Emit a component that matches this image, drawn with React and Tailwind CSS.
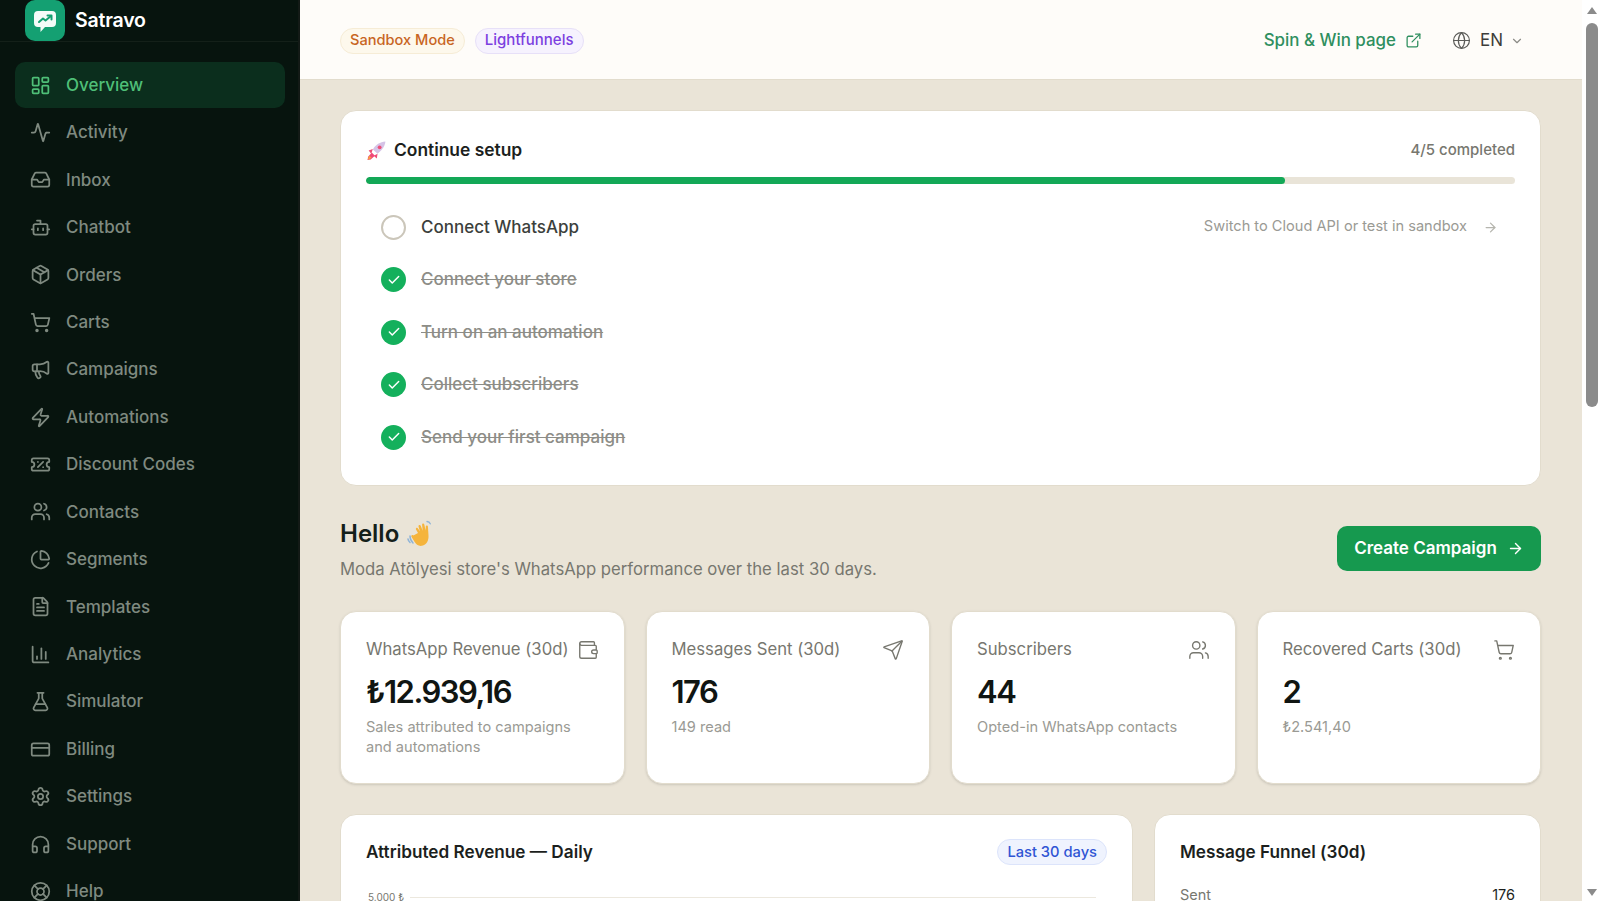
import React from "react";
import { LayoutDashboard, Activity, Inbox, Bot, Package, ShoppingCart, Megaphone, Zap, TicketPercent, Users, ChartPie, FileText, ChartColumn, FlaskConical, CreditCard, Settings, Headphones, LifeBuoy, Wallet, Send, ExternalLink, Globe, ChevronDown, ArrowRight, Check } from "lucide-react";

const nav = [
  ["Overview", LayoutDashboard], ["Activity", Activity], ["Inbox", Inbox], ["Chatbot", Bot], ["Orders", Package], ["Carts", ShoppingCart], ["Campaigns", Megaphone], ["Automations", Zap], ["Discount Codes", TicketPercent], ["Contacts", Users], ["Segments", ChartPie], ["Templates", FileText], ["Analytics", ChartColumn], ["Simulator", FlaskConical], ["Billing", CreditCard], ["Settings", Settings], ["Support", Headphones], ["Help", LifeBuoy],
];
const tasks = ["Connect your store", "Turn on an automation", "Collect subscribers", "Send your first campaign"];
const stats = [
  ["WhatsApp Revenue (30d)", Wallet, "₺12.939,16", ["Sales attributed to campaigns", "and automations"]],
  ["Messages Sent (30d)", Send, "176", ["149 read"]],
  ["Subscribers", Users, "44", ["Opted-in WhatsApp contacts"]],
  ["Recovered Carts (30d)", ShoppingCart, "2", ["₺2.541,40"]],
];

function Rocket() {
  return (
    <svg width="21" height="21" viewBox="0 0 20 20" className="shrink-0">
      <path d="M18.500 1.500c-5 .3-9.500 3-12 7.500l4.500 4c3.500-2.500 7-6.500 7.500-11.500z" fill="#d5c3e6" />
      <path d="M6.500 8.500 2.500 10l2.500 3zM11 13l-.7 4.500-3-2.500z" fill="#ee4f78" />
      <path d="M5.500 12 8.500 15 4.500 18.500 1.500 19 2 16z" fill="#f0487a" />
      <circle cx="13" cy="7" r="1.800" fill="#ee4f78" />
      <path d="M1.500 19 3 15l2.500 2z" fill="#f5a33c" />
    </svg>
  );
}
function Wave() {
  return (
    <svg width="30" height="28" viewBox="0 0 30 28" className="shrink-0">
      <path d="M11 13 9 9.500c-.6-1.400 1.200-2.300 2-1l2 3-1.500-5c-.4-1.500 1.600-2.100 2.200-.7l2 5-.6-6c-.1-1.500 1.900-1.800 2.200-.3l1.300 6 .2-4c.1-1.400 2-1.400 2.100 0l.6 9c.4 5-2 9.500-6.500 10.300-3.500.6-6-1.500-7.500-4l-3-5c-.8-1.300.8-2.500 1.900-1.400z" fill="#f5b43c" />
      <path d="M3 16c0 3 1 5 3 7M1 19c.3 1.500.8 2.500 2 3.500" stroke="#8fb4d8" strokeWidth="1.500" fill="none" strokeLinecap="round" />
      <path d="M20 1.500c1.500.2 2.700 1 3.300 2.300" stroke="#8fb4d8" strokeWidth="1.300" fill="none" strokeLinecap="round" />
    </svg>
  );
}
function Logo() {
  return (
    <div className="flex h-[41px] w-10 shrink-0 items-center justify-center rounded-[10px] bg-[#14a072]">
      <svg width="28" height="28" viewBox="0 0 28 28">
        <path d="M7 4h14a4 4 0 0 1 4 4v8a4 4 0 0 1-4 4h-7l-4.500 5v-5H7a4 4 0 0 1-4-4V8a4 4 0 0 1 4-4z" fill="#f4fbf8" />
        <path d="M8 15l4-3.500 2.500 2L20 9" stroke="#14a072" strokeWidth="2" fill="none" strokeLinecap="round" strokeLinejoin="round" />
        <path d="M16.500 8.500H20.500V12.500" stroke="#14a072" strokeWidth="2" fill="none" strokeLinecap="round" strokeLinejoin="round" />
      </svg>
    </div>
  );
}

export default function App() {
  return (
    <div className="flex h-[901px] w-full overflow-hidden bg-white font-['Inter',sans-serif]">
      <aside className="flex h-full w-[300px] shrink-0 flex-col overflow-hidden border-r-2 border-[#131a16] bg-[#07140e]">
        <div className="flex h-[42px] shrink-0 items-center gap-[10px] border-b border-[#142019] pl-[25px]">
          <Logo />
          <span className="text-[19.500px] font-semibold tracking-[-0.2px] text-white">Satravo</span>
        </div>
        <nav className="flex flex-col gap-[1.450px] pt-[20px] pl-[15px] pr-[13px]">
          {nav.map(([label, Icon], i) => (
            <div key={label} className={`flex h-[46px] shrink-0 items-center gap-[15px] rounded-[10px] pl-[15px] text-[17px] font-medium ${i === 0 ? "bg-[#0b2e1d] text-[#4fbf78]" : "text-[#7f8a80]"}`}>
              <Icon size={21} strokeWidth={2} className="shrink-0" />
              <span className="pt-[1px]">{label}</span>
            </div>
          ))}
        </nav>
      </aside>

      <div className="flex h-full min-w-0 flex-1 flex-col overflow-hidden bg-[#eae4d7]">
        <header className="flex h-[80px] shrink-0 items-center justify-between border-b border-[#e2dccd] bg-[#fefcf9] pt-[2px] pl-[40px] pr-[58px]">
          <div className="flex items-center gap-[10px]">
            <span className="flex h-[26px] items-center rounded-full border border-[#f6ecd6] bg-[#fdf8ec] px-[9px] text-[14.600px] font-medium text-[#c8651f]">Sandbox Mode</span>
            <span className="flex h-[26px] items-center rounded-full border border-[#e7e0f8] bg-[#f6f2fe] px-[9px] text-[15px] font-medium text-[#7c3fe0]">Lightfunnels</span>
          </div>
          <div className="flex items-center">
            <span className="text-[16.900px] font-medium text-[#2f8f5f]">Spin &amp; Win page</span>
            <ExternalLink size={17} strokeWidth={1.800} className="ml-[9px] text-[#2f8f5f]" />
            <Globe size={19} strokeWidth={1.500} className="ml-[30px] text-[#5b5b58]" />
            <span className="ml-[9px] text-[17px] text-[#3d3d3a]">EN</span>
            <ChevronDown size={14} className="ml-[7px] text-[#8b8b86]" />
          </div>
        </header>

        <main className="flex flex-col pt-[30px] pl-[40px] pr-[41px]">
          <section className="h-[376px] shrink-0 rounded-[16px] border border-[#e2dccd] bg-white px-[25px] pt-[26px]">
            <div className="flex h-[26px] items-center justify-between">
              <div className="flex items-center gap-[7px]">
                <Rocket />
                <span className="text-[17.400px] font-semibold text-[#1c1f1d]">Continue setup</span>
              </div>
              <span className="text-[15px] font-medium text-[#77776f]">4/5 completed</span>
            </div>
            <div className="mt-[14px] h-[7px] overflow-hidden rounded-full bg-[#e9e4d8]">
              <div className="h-full w-4/5 rounded-full bg-[#13a857]" />
            </div>
            <div className="mt-[17px] flex flex-col">
              <div className="flex h-[52.500px] items-center px-[15px]">
                <span className="h-[25px] w-[25px] shrink-0 rounded-full border-2 border-[#cbc6ba]" />
                <span className="ml-[15px] text-[17px] font-medium text-[#3c3f3c]">Connect WhatsApp</span>
                <span className="ml-auto text-[14.600px] text-[#9a9a94]">Switch to Cloud API or test in sandbox</span>
                <ArrowRight size={15} className="ml-[16px] mr-[2px] text-[#b5b5ae]" />
              </div>
              {tasks.map((t) => (
                <div key={t} className="flex h-[52.500px] items-center px-[15px]">
                  <span className="flex h-[25px] w-[25px] shrink-0 items-center justify-center rounded-full bg-[#14b05c]">
                    <Check size={14} strokeWidth={2.500} className="text-white" />
                  </span>
                  <span className="ml-[15px] text-[17px] font-medium text-[#8d8d87] line-through">{t}</span>
                </div>
              ))}
            </div>
          </section>

          <div className="mt-[31px] flex h-[68px] shrink-0 items-start justify-between">
            <div>
              <div className="flex h-[34px] items-center gap-[8px]">
                <h1 className="text-[24px] font-semibold text-[#14201a]">Hello</h1>
                <Wave />
              </div>
              <p className="mt-[6px] text-[16.700px] text-[#77776f]">Moda Atölyesi store's WhatsApp performance over the last 30 days.</p>
            </div>
            <button className="mt-[9px] flex h-[45px] w-[204px] items-center justify-center gap-[10px] rounded-[10px] bg-[#16994f] text-[17px] font-semibold text-white">
              Create Campaign
              <ArrowRight size={17} strokeWidth={2} />
            </button>
          </div>

          <div className="mt-[26px] grid h-[173px] shrink-0 grid-cols-4 gap-[21px]">
            {stats.map(([label, Icon, value, sub]) => (
              <div key={label} className="rounded-[16px] border border-[#e2dccd] bg-white px-[25px] pt-[26px] shadow-sm">
                <div className="flex h-[24px] items-center justify-between">
                  <span className="text-[16.700px] text-[#77776f]">{label}</span>
                  <Icon size={22} strokeWidth={1.500} className="shrink-0 text-[#77776f]" />
                </div>
                <div className="mt-[10px] text-[31px] leading-[40px] font-semibold tracking-[-1.500px] text-[#101512]">{value}</div>
                <div className="mt-[5px] text-[14.600px] leading-[20px] text-[#9a9a94]">
                  {sub.map((s) => <div key={s}>{s}</div>)}
                </div>
              </div>
            ))}
          </div>

          <div className="mt-[30px] flex gap-[21px]">
            <section className="h-[200px] w-[793px] shrink-0 rounded-[16px] border border-[#e2dccd] bg-white px-[25px] pt-[24px]">
              <div className="flex h-[26px] items-center justify-between">
                <span className="text-[17.200px] font-semibold text-[#1c1f1d]">Attributed Revenue — Daily</span>
                <span className="flex h-[26px] items-center rounded-full border border-[#dce4fb] bg-[#eff3fe] px-[9px] text-[14.700px] font-medium text-[#2f55d4]">Last 30 days</span>
              </div>
              <div className="mt-[25px] mr-[11px] flex items-center gap-[6px] pl-[2px]">
                <span className="text-[10px] text-[#77776f]">5.000 ₺</span>
                <div className="h-px flex-1 bg-[#ece8de]" />
              </div>
            </section>
            <section className="h-[200px] min-w-0 flex-1 rounded-[16px] border border-[#e2dccd] bg-white px-[25px] pt-[24px]">
              <div className="flex h-[26px] items-center">
                <span className="text-[17.200px] font-semibold text-[#1c1f1d]">Message Funnel (30d)</span>
              </div>
              <div className="mt-[19px] flex items-center justify-between text-[14.500px]">
                <span className="text-[#77776f]">Sent</span>
                <span className="text-[#1c1f1d]">176</span>
              </div>
            </section>
          </div>
        </main>
      </div>

      <div className="flex h-full w-[18px] shrink-0 flex-col items-center bg-white pl-[1px]">
        <div className="mt-[7px] h-0 w-0 border-x-[5px] border-b-[7px] border-x-transparent border-b-[#8b8b8b]" />
        <div className="mt-[9px] h-[384px] w-[12px] rounded-full bg-[#8b8b8b]" />
        <div className="mt-auto mb-[5px] h-0 w-0 border-x-[5px] border-t-[7px] border-x-transparent border-t-[#8b8b8b]" />
      </div>
    </div>
  );
}
